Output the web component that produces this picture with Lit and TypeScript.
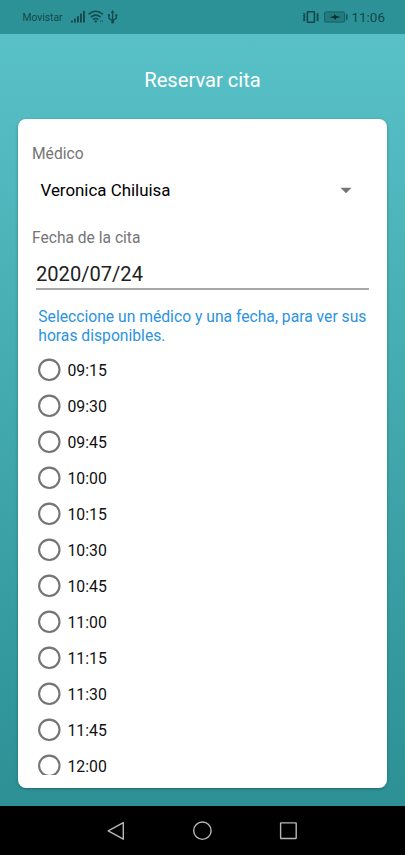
import { LitElement, html, css } from "lit";
import { customElement, property } from "lit/decorators.js";

@customElement("status-bar")
class StatusBar extends LitElement {
  static styles = css`
    :host { display: flex; height: 34px; background: #2d9297; color: #11474b; align-items: center; justify-content: space-between; padding: 0 20px 0 22.5px; box-sizing: border-box; font-family: Roboto, sans-serif; flex: none; }
    .side { display: flex; align-items: center; }
    .carrier { font-size: 10.3px; line-height: 34px; width: 47.5px; white-space: nowrap; padding-top: 1px; height: 34px; box-sizing: border-box; }
    .clock { font-size: 13.5px; line-height: 34px; white-space: nowrap; }
    svg { display: block; flex: none; }
  `;
  render() {
    return html`
      <div class="side">
        <span class="carrier">Movistar</span>
        <svg width="50" height="16" viewBox="70 9 50 16">
          <path d="M71 20.5h1.9v2H71zM74 18.6h1.9v3.9H74zM77 16.3h1.9v6.2H77zM80 13.6h1.9v8.9H80zM83 10.7h1.9v11.8H83z" fill="#14494d" />
          <g fill="none" stroke="#14494d" stroke-width="1.5">
            <path d="M88.5 14.4q7.2-6.2 14.4 0M90.8 17.2q4.9-4.1 9.8 0M93 19.7q2.7-2.2 5.4 0" />
            <path d="M112.6 12v10M108.9 15.4v3l3.7 2.4 3.7-2.4v-3" stroke-width="1.3" />
          </g>
          <g fill="#14494d">
            <circle cx="95.7" cy="21.4" r="1.2" /><path d="M100 20.2h1.2v2H100zM102 20.2h1v2h-1z" opacity=".6" />
            <path d="M110.8 13l1.8-3 1.8 3zM107.9 14.2h2v2h-2zM115.3 14.2h2v2h-2z" /><circle cx="112.6" cy="22" r="1.5" />
          </g>
        </svg>
      </div>
      <div class="side">
        <svg width="49" height="16" viewBox="302 9 49 16">
          <rect x="307.4" y="11.7" width="7" height="10.6" rx=".6" fill="none" stroke="#11474b" stroke-width="1.6" />
          <path d="M303.4 13.2l1.3 1.3-1 1.3 1 1.4-1 1.3 1 1.3-1.3 1.2M318.4 13.2l-1.3 1.3 1 1.3-1 1.4 1 1.3-1 1.3 1.3 1.2" fill="none" stroke="#11474b" stroke-width="1.4" />
          <rect x="324.6" y="11.9" width="20" height="10.2" rx="1.2" fill="#237a7f" stroke="#195e62" stroke-width="1" />
          <path d="M329.5 17.2l4.5-1.1.4-1.9 1.9 1.9 4.4.9-4.5 1.1-.6 1.8-1.8-1.9z" fill="#092d30" />
          <path d="M346.2 14.3h1.3v5.4h-1.3z" fill="#11474b" />
        </svg>
        <span class="clock">11:06</span>
      </div>`;
  }
}

@customElement("hour-option")
class HourOption extends LitElement {
  @property() label = "";
  static styles = css`
    :host { display: flex; align-items: center; height: 36px; gap: 5.3px; flex: none; }
    .text { font-size: 15.8px; line-height: 18px; padding-top: 2px; color: #111; white-space: nowrap; }
    svg { display: block; flex: none; }
  `;
  render() {
    return html`
      <svg width="24" height="24" viewBox="0 0 24 24"><circle cx="11.3" cy="11.8" r="10.2" fill="none" stroke="#757575" stroke-width="2.1" /></svg>
      <span class="text">${this.label}</span>`;
  }
}

@customElement("nav-bar")
class NavBar extends LitElement {
  static styles = css`
    :host { display: flex; height: 49px; flex: none; background: #000; align-items: center; justify-content: center; gap: 66px; padding-right: 1px; }
    svg { display: block; fill: none; stroke: #b8b8b8; stroke-width: 1.4; }
  `;
  render() {
    return html`
      <svg width="20" height="22" viewBox="0 0 20 22"><path d="M17.3 2.6v16.6L2.2 10.9z" stroke-linejoin="round" /></svg>
      <svg width="20" height="22" viewBox="0 0 20 22"><circle cx="10.4" cy="10.7" r="8.7" /></svg>
      <svg width="20" height="22" viewBox="0 0 20 22"><rect x="2.6" y="2.9" width="15.6" height="15.6" rx=".4" /></svg>`;
  }
}

@customElement("app-root")
class AppRoot extends LitElement {
  private hours = ["09:15", "09:30", "09:45", "10:00", "10:15", "10:30", "10:45", "11:00", "11:15", "11:30", "11:45", "12:00"];

  static styles = css`
    :host { display: flex; flex-direction: column; width: 405px; height: 855px; overflow: hidden; font-family: Roboto, sans-serif; }
    .page { height: 772px; box-sizing: border-box; padding: 0 18px 18px; display: flex; flex-direction: column; background: linear-gradient(#58c1c7, #2c9095); }
    .title { margin: 0; height: 85px; padding-top: 7px; box-sizing: border-box; font-size: 20.15px; font-weight: 400; line-height: 78px; text-align: center; color: #fff; }
    .card { flex: 1; min-height: 0; background: #fff; border-radius: 8px; box-shadow: 0 1px 3px rgba(0, 50, 55, 0.4); padding: 25px 18px 13.3px 14px; box-sizing: border-box; display: flex; flex-direction: column; }
    .label { font-size: 15.6px; line-height: 20px; color: #757575; }
    .select { display: flex; align-items: center; justify-content: space-between; height: 36px; margin-top: 8px; padding: 0 17px 0 8.5px; font-size: 16.9px; color: #000; }
    .arrow { display: block; }
    .date-label { margin-top: 20px; }
    .date { margin-left: 4px; height: 42px; box-sizing: border-box; border-bottom: 2px solid #a8a8a8; font-size: 20.1px; line-height: 52px; color: #212121; }
    .hint { margin: 18px 0 0 6.3px; font-size: 15.68px; line-height: 18.5px; color: #2b93e0; white-space: nowrap; }
    .hours { flex: 1; min-height: 0; overflow: hidden; margin: 7px 0 0 6.2px; }
  `;

  render() {
    return html`
      <status-bar></status-bar>
      <main class="page">
        <h1 class="title">Reservar cita</h1>
        <section class="card">
          <div class="label">Médico</div>
          <div class="select">
            <span>Veronica Chiluisa</span>
            <svg class="arrow" width="12" height="7" viewBox="0 0 12 7"><path d="M.5.7h11L6 6.3z" fill="#757575" /></svg>
          </div>
          <div class="label date-label">Fecha de la cita</div>
          <div class="date">2020/07/24</div>
          <div class="hint">Seleccione un médico y una fecha, para ver sus<br />horas disponibles.</div>
          <div class="hours">${this.hours.map((h) => html`<hour-option label=${h}></hour-option>`)}</div>
        </section>
      </main>
      <nav-bar></nav-bar>`;
  }
}
